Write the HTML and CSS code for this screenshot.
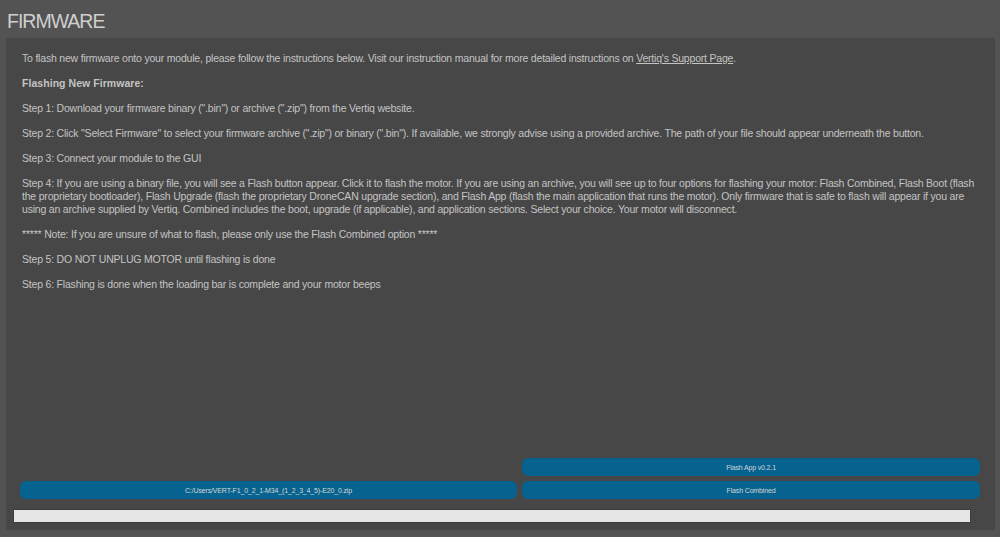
FILE: index.html
```html
<!DOCTYPE html>
<html lang="en">
<head>
    <meta charset="UTF-8">
    <title>Firmware</title>
    <link rel="stylesheet" href="styles.css">
</head>
<body>

    <h1 class="titulo">FIRMWARE</h1>

    <div class="painel">
        <div class="instrucoes">
            <p>To flash new firmware onto your module, please follow the instructions below. Visit our instruction manual for more detailed instructions on <a href="#">Vertiq's Support Page</a>.</p>
            <p><strong>Flashing New Firmware:</strong></p>
            <p>Step 1: Download your firmware binary (".bin") or archive (".zip") from the Vertiq website.</p>
            <p>Step 2: Click "Select Firmware" to select your firmware archive (".zip") or binary (".bin"). If available, we strongly advise using a provided archive. The path of your file should appear underneath the button.</p>
            <p>Step 3: Connect your module to the GUI</p>
            <p>Step 4: If you are using a binary file, you will see a Flash button appear. Click it to flash the motor. If you are using an archive, you will see up to four options for flashing your motor: Flash Combined, Flash Boot (flash the proprietary bootloader), Flash Upgrade (flash the proprietary DroneCAN upgrade section), and Flash App (flash the main application that runs the motor). Only firmware that is safe to flash will appear if you are using an archive supplied by Vertiq. Combined includes the boot, upgrade (if applicable), and application sections. Select your choice. Your motor will disconnect.</p>
            <p>***** Note: If you are unsure of what to flash, please only use the Flash Combined option *****</p>
            <p>Step 5: DO NOT UNPLUG MOTOR until flashing is done</p>
            <p>Step 6: Flashing is done when the loading bar is complete and your motor beeps</p>
        </div>

        <div class="botoes">
            <button class="btn col-direita">Flash App v0.2.1</button>
            <button class="btn">C:/Users/VERT-F1_0_2_1-M34_(1_2_3_4_5)-E20_0.zip</button>
            <button class="btn">Flash Combined</button>
        </div>

        <div class="barra"></div>
    </div>

</body>
</html>
```

FILE: styles.css
```css
body {
    margin: 0;
    background-color: #535353;
    color: #c4c4c4;
    font-family: "Liberation Sans", Arial, sans-serif;
    height: 537px;
    overflow: hidden;
}

.titulo {
    margin: 0;
    padding: 9px 7px 0;
    height: 29px;
    font-size: 19.5px;
    font-weight: normal;
    letter-spacing: -1px;
    line-height: 24px;
    color: #cfcfcf;
}

.painel {
    margin: 0 5px 0 6px;
    height: 492px;
    background-color: #474747;
    display: flex;
    flex-direction: column;
    box-sizing: border-box;
    padding: 14px 0 7px;
}

.instrucoes {
    flex: 1;
    padding: 0 16px;
    font-size: 10.5px;
    letter-spacing: -0.2px;
    line-height: 13px;
}

.instrucoes p {
    margin: 0 0 12px;
}

.instrucoes strong {
    letter-spacing: 0.05px;
}

.instrucoes a {
    color: #c4c4c4;
}

.botoes {
    display: grid;
    grid-template-columns: 497px 1fr;
    gap: 5px;
    padding: 0 15px 0 14px;
}

.col-direita {
    grid-column: 2;
}

.btn {
    height: 18px;
    border: none;
    border-radius: 6px;
    background-color: #06628f;
    color: #d6d6d6;
    font-family: "Liberation Sans", Arial, sans-serif;
    font-size: 7px;
    letter-spacing: -0.15px;
    padding: 0;
}

.barra {
    margin: 10px 24px 0 7px;
    height: 14px;
    box-sizing: border-box;
    background-color: #e6e6e6;
    border: 1px solid #3c3c3c;
}
```
